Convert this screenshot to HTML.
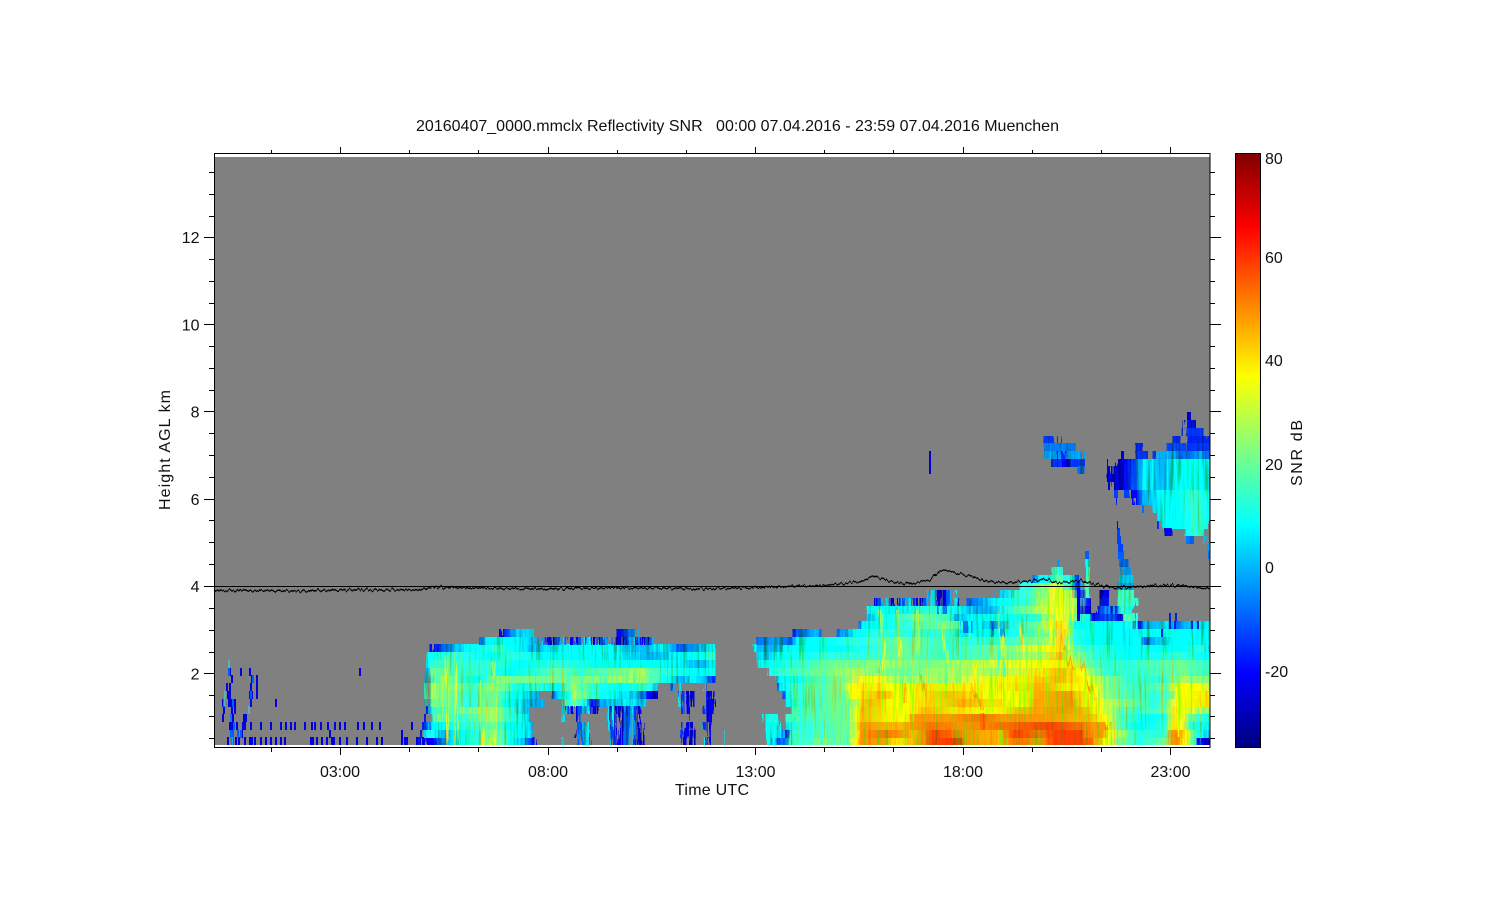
<!DOCTYPE html>
<html><head><meta charset="utf-8"><title>Reflectivity SNR</title>
<style>
html,body{margin:0;padding:0;background:#fff;width:1500px;height:900px;overflow:hidden}
svg{display:block}
text{font-family:"Liberation Sans",sans-serif;font-size:16px;fill:#111}
.n{stop-color:#0000c0}.B{stop-color:#0000ff}.b{stop-color:#0050ff}.a{stop-color:#00a0ff}.C{stop-color:#00e0ff}.c{stop-color:#00ffff}.t{stop-color:#30ffd0}.g{stop-color:#70ff90}.l{stop-color:#a0ff60}.Y{stop-color:#d8ff28}.y{stop-color:#ffff00}.h{stop-color:#ffd800}.o{stop-color:#ffb000}.O{stop-color:#ff9000}.r{stop-color:#ff7000}.R{stop-color:#ff4000}
</style></head><body>
<svg width="1500" height="900" viewBox="0 0 1500 900" xmlns="http://www.w3.org/2000/svg">
<defs>
<linearGradient id="m" gradientUnits="userSpaceOnUse" x1="210" y1="0" x2="1210" y2="0"></linearGradient>
<linearGradient id="cb" x1="0" y1="0" x2="0" y2="1"><stop offset="0" stop-color="#7f0000"/><stop offset=".125" stop-color="#ff0000"/><stop offset=".375" stop-color="#ffff00"/><stop offset=".625" stop-color="#00ffff"/><stop offset=".875" stop-color="#0000ff"/><stop offset="1" stop-color="#00007f"/></linearGradient>
<pattern id="p" width="23" height="8" patternUnits="userSpaceOnUse"><rect width="3" height="8" fill="#0000d0"/><rect x="3" width="4" height="8" fill="#0050ff"/><rect x="7" width="2" height="8" fill="#00a0ff"/><rect x="11" width="3" height="8" fill="#00d0ff"/><rect x="14" width="2" height="8" fill="#0030ff"/><rect x="18" width="3" height="8" fill="#0000e0"/></pattern>
<clipPath id="plot"><rect x="215" y="157" width="995" height="588"/></clipPath>
<filter id="shred" filterUnits="userSpaceOnUse" x="200" y="150" width="1020" height="600" color-interpolation-filters="sRGB">
<feTurbulence type="fractalNoise" baseFrequency=".3 .015" numOctaves="2" seed="7" result="nz"/>
<feColorMatrix in="nz" type="matrix" values="1 0 0 0 0 0 0 0 0 .5 0 0 0 0 0 0 0 0 0 1" result="nx"/>
<feDisplacementMap in="SourceGraphic" in2="nx" scale="14" xChannelSelector="R" yChannelSelector="G" result="d"/>
<feTurbulence type="fractalNoise" baseFrequency=".42 .018" numOctaves="2" seed="11" result="n2"/>
<feColorMatrix in="n2" type="matrix" values="1 0 0 0 0 -.5 0 0 0 .8 -1 0 0 0 1 0 0 0 0 1" result="m2"/>
<feComposite in="d" in2="m2" operator="arithmetic" k1="1.6" k2=".2" k3="0" k4="0"/>
</filter>
<filter id="jit" filterUnits="userSpaceOnUse" x="200" y="550" width="1020" height="60" color-interpolation-filters="sRGB">
<feTurbulence type="fractalNoise" baseFrequency=".35 .01" numOctaves="2" seed="3" result="nz"/>
<feColorMatrix in="nz" type="matrix" values="0 0 0 0 .5 0 1 0 0 0 0 0 0 0 0 0 0 0 0 1" result="ny"/>
<feDisplacementMap in="SourceGraphic" in2="ny" scale="7" xChannelSelector="R" yChannelSelector="G"/>
</filter>

<linearGradient id="L0" href="#m"><stop offset=".215" class="n"/><stop offset=".222" class="B"/><stop offset=".235" class="a"/><stop offset=".25" class="c"/><stop offset=".27" class="t"/><stop offset=".282" class="Y"/><stop offset=".29" class="g"/><stop offset=".302" class="c"/><stop offset=".315" class="a"/><stop offset=".324" class="B"/></linearGradient>
<linearGradient id="L1" href="#m"><stop offset=".215" class="a"/><stop offset=".22" class="t"/><stop offset=".227" class="C"/><stop offset=".235" class="a"/><stop offset=".25" class="c"/><stop offset=".27" class="t"/><stop offset=".282" class="l"/><stop offset=".295" class="t"/><stop offset=".305" class="c"/><stop offset=".315" class="C"/><stop offset=".323" class="a"/></linearGradient>
<linearGradient id="L2" href="#m"><stop offset=".215" class="B"/><stop offset=".222" class="C"/><stop offset=".235" class="c"/><stop offset=".26" class="t"/><stop offset=".282" class="g"/><stop offset=".3" class="c"/><stop offset=".315" class="C"/><stop offset=".322" class="a"/></linearGradient>
<linearGradient id="L3" href="#m"><stop offset=".222" class="a"/><stop offset=".228" class="g"/><stop offset=".25" class="t"/><stop offset=".282" class="l"/><stop offset=".3" class="t"/><stop offset=".315" class="C"/><stop offset=".318" class="a"/></linearGradient>
<linearGradient id="L4" href="#m"><stop offset=".218" class="a"/><stop offset=".225" class="t"/><stop offset=".25" class="g"/><stop offset=".282" class="l"/><stop offset=".3" class="t"/><stop offset=".318" class="a"/></linearGradient>
<linearGradient id="L5" href="#m"><stop offset=".217" class="a"/><stop offset=".222" class="g"/><stop offset=".24" class="g"/><stop offset=".26" class="t"/><stop offset=".282" class="g"/><stop offset=".3" class="c"/><stop offset=".32" class="a"/><stop offset=".335" class="a"/><stop offset=".355" class="t"/><stop offset=".365" class="g"/><stop offset=".375" class="C"/><stop offset=".382" class="B"/><stop offset=".395" class="a"/><stop offset=".42" class="C"/><stop offset=".437" class="a"/></linearGradient>
<linearGradient id="L6" href="#m"><stop offset=".216" class="C"/><stop offset=".222" class="l"/><stop offset=".24" class="g"/><stop offset=".26" class="t"/><stop offset=".282" class="g"/><stop offset=".305" class="c"/><stop offset=".329" class="a"/><stop offset=".342" class="b"/><stop offset=".355" class="c"/><stop offset=".365" class="l"/><stop offset=".372" class="g"/><stop offset=".38" class="t"/><stop offset=".4" class="c"/><stop offset=".43" class="a"/><stop offset=".44" class="B"/><stop offset=".447" class="n"/></linearGradient>
<linearGradient id="L7" href="#m"><stop offset=".216" class="C"/><stop offset=".222" class="l"/><stop offset=".25" class="g"/><stop offset=".26" class="t"/><stop offset=".285" class="l"/><stop offset=".295" class="g"/><stop offset=".31" class="c"/><stop offset=".325" class="t"/><stop offset=".35" class="C"/><stop offset=".36" class="l"/><stop offset=".38" class="t"/><stop offset=".41" class="c"/><stop offset=".44" class="t"/><stop offset=".447" class="a"/></linearGradient>
<linearGradient id="L8" href="#m"><stop offset=".216" class="a"/><stop offset=".222" class="t"/><stop offset=".235" class="l"/><stop offset=".25" class="t"/><stop offset=".27" class="c"/><stop offset=".287" class="l"/><stop offset=".305" class="g"/><stop offset=".355" class="g"/><stop offset=".38" class="g"/><stop offset=".42" class="l"/><stop offset=".44" class="g"/><stop offset=".458" class="c"/><stop offset=".47" class="a"/><stop offset=".485" class="C"/><stop offset=".495" class="a"/><stop offset=".504" class="B"/></linearGradient>
<linearGradient id="L9" href="#m"><stop offset=".216" class="a"/><stop offset=".222" class="g"/><stop offset=".25" class="t"/><stop offset=".28" class="t"/><stop offset=".3" class="c"/><stop offset=".33" class="t"/><stop offset=".35" class="g"/><stop offset=".37" class="t"/><stop offset=".41" class="g"/><stop offset=".43" class="l"/><stop offset=".45" class="t"/><stop offset=".48" class="c"/><stop offset=".49" class="C"/><stop offset=".504" class="c"/></linearGradient>
<linearGradient id="L10" href="#m"><stop offset=".216" class="C"/><stop offset=".222" class="t"/><stop offset=".28" class="t"/><stop offset=".31" class="c"/><stop offset=".35" class="t"/><stop offset=".39" class="c"/><stop offset=".44" class="c"/><stop offset=".47" class="C"/><stop offset=".49" class="a"/><stop offset=".504" class="C"/></linearGradient>
<linearGradient id="L11" href="#m"><stop offset=".216" class="c"/><stop offset=".25" class="t"/><stop offset=".28" class="c"/><stop offset=".305" class="t"/><stop offset=".33" class="C"/><stop offset=".36" class="c"/><stop offset=".41" class="C"/><stop offset=".44" class="a"/><stop offset=".47" class="C"/><stop offset=".49" class="c"/><stop offset=".504" class="t"/></linearGradient>
<linearGradient id="L12" href="#m"><stop offset=".222" class="B"/><stop offset=".233" class="b"/><stop offset=".245" class="a"/><stop offset=".26" class="c"/><stop offset=".285" class="t"/><stop offset=".305" class="c"/><stop offset=".32" class="a"/><stop offset=".35" class="C"/><stop offset=".39" class="c"/><stop offset=".43" class="a"/><stop offset=".455" class="C"/><stop offset=".47" class="b"/><stop offset=".49" class="a"/><stop offset=".502" class="C"/></linearGradient>
<linearGradient id="L13" href="#m"><stop offset=".267" class="b"/><stop offset=".28" class="C"/><stop offset=".3" class="c"/><stop offset=".325" class="a"/></linearGradient>
<linearGradient id="L14" href="#m"><stop offset=".29" class="B"/><stop offset=".305" class="a"/><stop offset=".322" class="C"/><stop offset=".407" class="B"/><stop offset=".425" class="a"/></linearGradient>

<linearGradient id="R0" href="#m"><stop offset=".555" class="c"/><stop offset=".562" class="C"/><stop offset=".57" class="b"/><stop offset=".578" class="a"/><stop offset=".582" class="t"/><stop offset=".61" class="g"/><stop offset=".64" class="g"/><stop offset=".645" class="y"/><stop offset=".652" class="O"/><stop offset=".675" class="O"/><stop offset=".685" class="h"/><stop offset=".705" class="o"/><stop offset=".725" class="R"/><stop offset=".747" class="R"/><stop offset=".755" class="O"/><stop offset=".79" class="o"/><stop offset=".805" class="r"/><stop offset=".83" class="O"/><stop offset=".845" class="R"/><stop offset=".872" class="R"/><stop offset=".89" class="o"/><stop offset=".898" class="y"/><stop offset=".91" class="g"/><stop offset=".93" class="t"/><stop offset=".955" class="g"/><stop offset=".963" class="O"/><stop offset=".97" class="O"/><stop offset=".976" class="y"/><stop offset=".985" class="t"/><stop offset=".99" class="B"/><stop offset="1" class="n"/></linearGradient>
<linearGradient id="R1" href="#m"><stop offset=".555" class="c"/><stop offset=".57" class="C"/><stop offset=".576" class="B"/><stop offset=".582" class="t"/><stop offset=".64" class="g"/><stop offset=".648" class="y"/><stop offset=".652" class="O"/><stop offset=".675" class="r"/><stop offset=".69" class="O"/><stop offset=".705" class="o"/><stop offset=".725" class="R"/><stop offset=".755" class="O"/><stop offset=".79" class="o"/><stop offset=".805" class="R"/><stop offset=".83" class="r"/><stop offset=".843" class="R"/><stop offset=".87" class="R"/><stop offset=".88" class="O"/><stop offset=".895" class="O"/><stop offset=".898" class="y"/><stop offset=".91" class="l"/><stop offset=".925" class="t"/><stop offset=".955" class="t"/><stop offset=".962" class="O"/><stop offset=".97" class="O"/><stop offset=".977" class="y"/><stop offset=".985" class="t"/><stop offset=".995" class="C"/><stop offset="1" class="a"/></linearGradient>
<linearGradient id="R2" href="#m"><stop offset=".576" class="C"/><stop offset=".59" class="t"/><stop offset=".64" class="g"/><stop offset=".647" class="h"/><stop offset=".652" class="O"/><stop offset=".69" class="o"/><stop offset=".72" class="r"/><stop offset=".755" class="O"/><stop offset=".79" class="r"/><stop offset=".84" class="R"/><stop offset=".873" class="r"/><stop offset=".88" class="O"/><stop offset=".897" class="O"/><stop offset=".902" class="l"/><stop offset=".915" class="t"/><stop offset=".93" class="c"/><stop offset=".955" class="t"/><stop offset=".962" class="h"/><stop offset=".97" class="y"/><stop offset=".98" class="t"/><stop offset="1" class="C"/></linearGradient>
<linearGradient id="R3" href="#m"><stop offset=".576" class="t"/><stop offset=".64" class="g"/><stop offset=".645" class="y"/><stop offset=".652" class="o"/><stop offset=".695" class="y"/><stop offset=".705" class="O"/><stop offset=".74" class="O"/><stop offset=".775" class="r"/><stop offset=".79" class="O"/><stop offset=".83" class="O"/><stop offset=".88" class="o"/><stop offset=".887" class="h"/><stop offset=".893" class="y"/><stop offset=".905" class="g"/><stop offset=".92" class="t"/><stop offset=".94" class="c"/><stop offset=".955" class="t"/><stop offset=".963" class="h"/><stop offset=".97" class="y"/><stop offset=".98" class="g"/><stop offset="1" class="c"/></linearGradient>
<linearGradient id="R4" href="#m"><stop offset=".581" class="t"/><stop offset=".64" class="g"/><stop offset=".645" class="y"/><stop offset=".652" class="o"/><stop offset=".675" class="h"/><stop offset=".695" class="y"/><stop offset=".715" class="o"/><stop offset=".78" class="y"/><stop offset=".795" class="h"/><stop offset=".81" class="o"/><stop offset=".85" class="O"/><stop offset=".875" class="o"/><stop offset=".887" class="y"/><stop offset=".905" class="g"/><stop offset=".93" class="t"/><stop offset=".955" class="g"/><stop offset=".963" class="h"/><stop offset=".975" class="y"/><stop offset=".99" class="l"/><stop offset="1" class="g"/></linearGradient>
<linearGradient id="R5" href="#m"><stop offset=".576" class="C"/><stop offset=".582" class="c"/><stop offset=".59" class="t"/><stop offset=".635" class="g"/><stop offset=".643" class="l"/><stop offset=".648" class="h"/><stop offset=".66" class="o"/><stop offset=".685" class="y"/><stop offset=".71" class="h"/><stop offset=".75" class="o"/><stop offset=".79" class="h"/><stop offset=".81" class="y"/><stop offset=".825" class="o"/><stop offset=".86" class="O"/><stop offset=".875" class="h"/><stop offset=".885" class="y"/><stop offset=".9" class="l"/><stop offset=".92" class="g"/><stop offset=".94" class="t"/><stop offset=".955" class="g"/><stop offset=".965" class="y"/><stop offset=".995" class="h"/><stop offset="1" class="y"/></linearGradient>
<linearGradient id="R6" href="#m"><stop offset=".573" class="B"/><stop offset=".578" class="C"/><stop offset=".585" class="t"/><stop offset=".635" class="g"/><stop offset=".642" class="y"/><stop offset=".65" class="h"/><stop offset=".675" class="o"/><stop offset=".69" class="y"/><stop offset=".71" class="h"/><stop offset=".74" class="o"/><stop offset=".78" class="y"/><stop offset=".81" class="y"/><stop offset=".83" class="o"/><stop offset=".855" class="O"/><stop offset=".875" class="h"/><stop offset=".88" class="y"/><stop offset=".9" class="g"/><stop offset=".94" class="t"/><stop offset=".96" class="g"/><stop offset=".97" class="y"/><stop offset="1" class="h"/></linearGradient>
<linearGradient id="R7" href="#m"><stop offset=".568" class="n"/><stop offset=".573" class="C"/><stop offset=".585" class="t"/><stop offset=".63" class="g"/><stop offset=".642" class="y"/><stop offset=".66" class="h"/><stop offset=".68" class="y"/><stop offset=".71" class="h"/><stop offset=".735" class="h"/><stop offset=".78" class="y"/><stop offset=".84" class="o"/><stop offset=".85" class="h"/><stop offset=".88" class="y"/><stop offset=".9" class="g"/><stop offset=".93" class="t"/><stop offset=".955" class="g"/><stop offset=".97" class="y"/><stop offset=".99" class="y"/><stop offset="1" class="l"/></linearGradient>
<linearGradient id="R8" href="#m"><stop offset=".566" class="a"/><stop offset=".571" class="C"/><stop offset=".58" class="c"/><stop offset=".6" class="t"/><stop offset=".63" class="g"/><stop offset=".642" class="l"/><stop offset=".66" class="y"/><stop offset=".69" class="l"/><stop offset=".74" class="l"/><stop offset=".79" class="y"/><stop offset=".82" class="h"/><stop offset=".85" class="o"/><stop offset=".875" class="y"/><stop offset=".89" class="l"/><stop offset=".92" class="t"/><stop offset=".95" class="t"/><stop offset=".97" class="l"/><stop offset="1" class="g"/></linearGradient>
<linearGradient id="R9" href="#m"><stop offset=".558" class="c"/><stop offset=".57" class="t"/><stop offset=".62" class="g"/><stop offset=".64" class="l"/><stop offset=".695" class="g"/><stop offset=".735" class="l"/><stop offset=".79" class="l"/><stop offset=".83" class="h"/><stop offset=".855" class="o"/><stop offset=".87" class="y"/><stop offset=".885" class="g"/><stop offset=".9" class="t"/><stop offset=".93" class="t"/><stop offset=".97" class="g"/><stop offset="1" class="t"/></linearGradient>
<linearGradient id="R10" href="#m"><stop offset=".548" class="C"/><stop offset=".56" class="c"/><stop offset=".59" class="t"/><stop offset=".625" class="g"/><stop offset=".65" class="g"/><stop offset=".67" class="l"/><stop offset=".72" class="g"/><stop offset=".75" class="l"/><stop offset=".83" class="y"/><stop offset=".86" class="h"/><stop offset=".875" class="g"/><stop offset=".895" class="t"/><stop offset=".92" class="t"/><stop offset=".97" class="g"/><stop offset="1" class="t"/></linearGradient>
<linearGradient id="R11" href="#m"><stop offset=".546" class="C"/><stop offset=".555" class="a"/><stop offset=".57" class="c"/><stop offset=".62" class="t"/><stop offset=".65" class="t"/><stop offset=".69" class="g"/><stop offset=".74" class="t"/><stop offset=".79" class="g"/><stop offset=".83" class="l"/><stop offset=".85" class="o"/><stop offset=".865" class="l"/><stop offset=".885" class="t"/><stop offset=".92" class="c"/><stop offset=".97" class="t"/><stop offset="1" class="c"/></linearGradient>
<linearGradient id="R12" href="#m"><stop offset=".543" class="c"/><stop offset=".55" class="a"/><stop offset=".565" class="a"/><stop offset=".58" class="c"/><stop offset=".63" class="c"/><stop offset=".66" class="t"/><stop offset=".69" class="g"/><stop offset=".74" class="t"/><stop offset=".79" class="g"/><stop offset=".84" class="y"/><stop offset=".85" class="h"/><stop offset=".865" class="g"/><stop offset=".88" class="t"/><stop offset=".915" class="c"/><stop offset=".97" class="c"/><stop offset=".995" class="t"/><stop offset="1" class="a"/></linearGradient>
<linearGradient id="R13" href="#m"><stop offset=".546" class="b"/><stop offset=".565" class="a"/><stop offset=".58" class="b"/><stop offset=".59" class="C"/><stop offset=".61" class="c"/><stop offset=".645" class="t"/><stop offset=".69" class="g"/><stop offset=".74" class="t"/><stop offset=".79" class="t"/><stop offset=".84" class="l"/><stop offset=".85" class="h"/><stop offset=".865" class="t"/><stop offset=".88" class="c"/><stop offset=".92" class="C"/><stop offset=".93" class="c"/><stop offset=".935" class="b"/><stop offset=".945" class="a"/><stop offset=".965" class="c"/><stop offset="1" class="C"/></linearGradient>
<linearGradient id="R14" href="#m"><stop offset=".582" class="n"/><stop offset=".59" class="b"/><stop offset=".605" class="a"/><stop offset=".613" class="b"/><stop offset=".628" class="b"/><stop offset=".635" class="a"/><stop offset=".645" class="c"/><stop offset=".67" class="t"/><stop offset=".74" class="t"/><stop offset=".75" class="C"/><stop offset=".79" class="c"/><stop offset=".84" class="g"/><stop offset=".855" class="h"/><stop offset=".865" class="t"/><stop offset=".885" class="c"/><stop offset=".915" class="C"/><stop offset=".96" class="c"/><stop offset="1" class="C"/></linearGradient>
<linearGradient id="R15" href="#m"><stop offset=".648" class="b"/><stop offset=".652" class="C"/><stop offset=".67" class="c"/><stop offset=".69" class="t"/><stop offset=".735" class="g"/><stop offset=".76" class="c"/><stop offset=".785" class="a"/><stop offset=".81" class="t"/><stop offset=".83" class="g"/><stop offset=".848" class="h"/><stop offset=".855" class="y"/><stop offset=".865" class="c"/><stop offset=".88" class="c"/><stop offset=".915" class="C"/><stop offset=".925" class="t"/><stop offset=".928" class="B"/><stop offset=".935" class="a"/><stop offset=".945" class="a"/><stop offset=".96" class="C"/><stop offset=".965" class="b"/><stop offset=".975" class="a"/><stop offset="1" class="C"/></linearGradient>
<linearGradient id="R16" href="#m"><stop offset=".656" class="a"/><stop offset=".67" class="c"/><stop offset=".71" class="g"/><stop offset=".74" class="t"/><stop offset=".745" class="a"/><stop offset=".76" class="C"/><stop offset=".79" class="c"/><stop offset=".83" class="t"/><stop offset=".85" class="y"/><stop offset=".865" class="g"/><stop offset=".878" class="C"/><stop offset=".882" class="B"/><stop offset=".9" class="b"/><stop offset=".912" class="n"/><stop offset=".915" class="g"/><stop offset=".925" class="t"/></linearGradient>
<linearGradient id="R17" href="#m"><stop offset=".658" class="C"/><stop offset=".67" class="c"/><stop offset=".69" class="C"/><stop offset=".72" class="t"/><stop offset=".75" class="C"/><stop offset=".765" class="a"/><stop offset=".78" class="a"/><stop offset=".8" class="t"/><stop offset=".85" class="y"/><stop offset=".865" class="l"/><stop offset=".875" class="B"/><stop offset=".88" class="n"/></linearGradient>
<linearGradient id="R17b" href="#m"><stop offset=".887" class="B"/><stop offset=".9" class="a"/><stop offset=".905" class="B"/><stop offset=".912" class="t"/><stop offset=".923" class="c"/></linearGradient>
<linearGradient id="R18" href="#m"><stop offset=".758" class="b"/><stop offset=".775" class="a"/><stop offset=".79" class="c"/><stop offset=".815" class="t"/><stop offset=".85" class="y"/><stop offset=".865" class="l"/><stop offset=".875" class="b"/><stop offset=".88" class="B"/></linearGradient>
<linearGradient id="R19" href="#m"><stop offset=".788" class="a"/><stop offset=".81" class="t"/><stop offset=".83" class="g"/><stop offset=".85" class="y"/><stop offset=".862" class="l"/><stop offset=".87" class="B"/><stop offset=".876" class="g"/><stop offset=".88" class="t"/></linearGradient>
<linearGradient id="R20" href="#m"><stop offset=".82" class="t"/><stop offset=".835" class="l"/><stop offset=".85" class="Y"/><stop offset=".862" class="c"/><stop offset=".868" class="B"/><stop offset=".875" class="g"/><stop offset=".88" class="t"/></linearGradient>
<linearGradient id="R21" href="#m"><stop offset=".823" class="b"/><stop offset=".83" class="C"/><stop offset=".842" class="c"/><stop offset=".85" class="g"/><stop offset=".862" class="c"/><stop offset=".869" class="B"/></linearGradient>
<linearGradient id="cU" href="#m"><stop offset=".905" class="n"/><stop offset=".92" class="B"/><stop offset=".935" class="b"/><stop offset=".945" class="a"/><stop offset=".96" class="a"/><stop offset=".975" class="b"/><stop offset=".99" class="a"/><stop offset="1" class="b"/></linearGradient>
<linearGradient id="cM" href="#m"><stop offset=".905" class="n"/><stop offset=".915" class="B"/><stop offset=".925" class="b"/><stop offset=".935" class="C"/><stop offset=".95" class="a"/><stop offset=".965" class="C"/><stop offset=".98" class="c"/><stop offset="1" class="C"/></linearGradient>
<linearGradient id="cL" href="#m"><stop offset=".925" class="B"/><stop offset=".935" class="a"/><stop offset=".95" class="C"/><stop offset=".97" class="c"/><stop offset=".985" class="t"/><stop offset="1" class="c"/></linearGradient>
<linearGradient id="c2" href="#m"><stop offset=".834" class="b"/><stop offset=".845" class="a"/><stop offset=".85" class="b"/><stop offset=".86" class="a"/><stop offset=".868" class="C"/><stop offset=".873" class="a"/></linearGradient>
</defs>

<rect x="215" y="157" width="995" height="588" fill="#808080"/>

<g clip-path="url(#plot)">
<g filter="url(#shred)">
<g shape-rendering="crispEdges">
<!-- left blob -->
<rect x="425" y="737" width="109" height="8" fill="url(#L0)"/>
<rect x="425" y="730" width="108" height="8" fill="url(#L1)"/>
<rect x="425" y="722" width="107" height="8" fill="url(#L2)"/>
<rect x="432" y="714" width="96" height="8" fill="url(#L3)"/>
<rect x="428" y="706" width="100" height="8" fill="url(#L4)"/>
<rect x="427" y="699" width="118" height="8" fill="url(#L5)"/><rect x="565" y="699" width="82" height="8" fill="url(#L5)"/>
<rect x="426" y="691" width="113" height="8" fill="url(#L6)"/><rect x="552" y="691" width="105" height="8" fill="url(#L6)"/>
<rect x="426" y="683" width="231" height="8" fill="url(#L7)"/>
<rect x="426" y="675" width="288" height="8" fill="url(#L8)"/>
<rect x="426" y="668" width="288" height="8" fill="url(#L9)"/>
<rect x="426" y="660" width="288" height="8" fill="url(#L10)"/>
<rect x="426" y="652" width="288" height="8" fill="url(#L11)"/>
<rect x="432" y="644" width="282" height="8" fill="url(#L12)"/>
<rect x="477" y="637" width="58" height="8" fill="url(#L13)"/>
<rect x="540" y="637" width="113" height="8" fill="url(#p)"/>
<rect x="500" y="629" width="32" height="8" fill="url(#L14)"/><rect x="617" y="629" width="18" height="8" fill="url(#L14)"/>
<!-- sparse patches -->
<path fill="url(#p)" d="M561 737h3v8h-3zM580 737h11v8h-11zM607 737h36v8h-36zM682 737h11v8h-11zM703 737h8v8h-8zM723 737h2v8h-2zM573 730h4v8h-4zM580 730h10v8h-10zM610 730h32v8h-32zM681 730h14v8h-14zM706 730h4v8h-4zM723 730h2v8h-2zM561 722h2v8h-2zM578 722h12v8h-12zM607 722h38v8h-38zM682 722h10v8h-10zM703 722h7v8h-7zM562 714h3v8h-3zM575 714h5v8h-5zM605 714h35v8h-35zM687 714h3v8h-3zM706 714h6v8h-6zM565 706h35v8h-35zM607 706h35v8h-35zM682 706h8v8h-8zM704 706h8v8h-8zM680 699h13v8h-13zM705 699h10v8h-10zM680 691h13v8h-13zM705 691h5v8h-5zM670 683h10v8h-10zM703 683h5v8h-5z"/>
<!-- right blob -->
<rect x="765" y="737" width="445" height="8" fill="url(#R0)"/>
<rect x="765" y="730" width="445" height="8" fill="url(#R1)"/>
<rect x="765" y="722" width="15" height="8" fill="#00f0ff"/><rect x="786" y="722" width="424" height="8" fill="url(#R2)"/>
<rect x="765" y="714" width="15" height="8" fill="#10ffe8"/><rect x="786" y="714" width="424" height="8" fill="url(#R3)"/>
<rect x="791" y="706" width="419" height="8" fill="url(#R4)"/>
<rect x="786" y="699" width="424" height="8" fill="url(#R5)"/>
<rect x="783" y="691" width="427" height="8" fill="url(#R6)"/>
<rect x="778" y="683" width="432" height="8" fill="url(#R7)"/>
<rect x="776" y="675" width="434" height="8" fill="url(#R8)"/>
<rect x="768" y="668" width="442" height="8" fill="url(#R9)"/>
<rect x="758" y="660" width="452" height="8" fill="url(#R10)"/>
<rect x="756" y="652" width="454" height="8" fill="url(#R11)"/>
<rect x="753" y="644" width="457" height="8" fill="url(#R12)"/>
<rect x="756" y="637" width="454" height="8" fill="url(#R13)"/>
<rect x="792" y="629" width="31" height="8" fill="url(#R14)"/><rect x="838" y="629" width="372" height="8" fill="url(#R14)"/>
<rect x="858" y="621" width="352" height="8" fill="url(#R15)"/>
<rect x="866" y="613" width="271" height="8" fill="url(#R16)"/>
<rect x="868" y="606" width="222" height="8" fill="url(#R17)"/><rect x="1097" y="606" width="38" height="8" fill="url(#R17b)"/>
<rect x="873" y="598" width="87" height="8" fill="url(#p)"/><rect x="968" y="598" width="122" height="8" fill="url(#R18)"/><rect x="1100" y="598" width="8" height="8" fill="#0020f0"/><rect x="1117" y="598" width="20" height="8" fill="url(#R19)"/>
<rect x="928" y="590" width="27" height="8" fill="url(#p)"/><rect x="998" y="590" width="92" height="8" fill="url(#R19)"/><rect x="1100" y="590" width="8" height="8" fill="#0000d0"/><rect x="1118" y="590" width="16" height="8" fill="url(#R19)"/>
<rect x="1020" y="582" width="70" height="8" fill="url(#R20)"/><rect x="1117" y="582" width="17" height="8" fill="url(#c2)"/>
<rect x="1033" y="575" width="46" height="8" fill="url(#R21)"/><rect x="1085" y="575" width="6" height="8" fill="#40ffb0"/><rect x="1118" y="575" width="14" height="8" fill="#00c0ff"/>
<rect x="1053" y="567" width="12" height="8" fill="#30f0d0"/><rect x="1085" y="567" width="6" height="8" fill="#20ffd0"/><rect x="1121" y="567" width="9" height="8" fill="#0090ff"/>
<rect x="1058" y="559" width="2" height="8" fill="#0090ff"/><rect x="1084" y="559" width="6" height="8" fill="#00e0ff"/><rect x="1119" y="559" width="9" height="8" fill="#0060ff"/>
<!-- blue holes at top of right blob -->
<rect x="960" y="621" width="10" height="12" fill="#0070ff"/><rect x="990" y="621" width="4" height="16" fill="#0050ff"/><rect x="1002" y="629" width="3" height="8" fill="#00a0ff"/><rect x="940" y="606" width="8" height="8" fill="#0070ff"/>
<!-- small cloud -->
<path fill="#0030ff" d="M1044 436h11v8h-11zM1061 436h3v8h-3z"/>
<path fill="#0070ff" d="M1044 443h13v8h-13zM1059 443h18v8h-18z"/>
<path fill="#0090ff" d="M1044 451h16v8h-16zM1066 451h16v8h-16z"/><rect x="1060" y="451" width="6" height="8" fill="#0020f0"/>
<path fill="#0030ff" d="M1051 459h9v8h-9zM1072 459h11v8h-11z"/><rect x="1060" y="459" width="12" height="8" fill="#0000d0"/>
<rect x="1078" y="466" width="5" height="8" fill="#0060ff"/>
<!-- upper cloud -->
<rect x="1185" y="420" width="9" height="8" fill="#0010e0"/>
<rect x="1184" y="428" width="21" height="8" fill="#0030ff"/>
<rect x="1173" y="436" width="5" height="8" fill="#0020f0"/><rect x="1188" y="436" width="22" height="8" fill="#0020f0"/>
<rect x="1136" y="443" width="5" height="8" fill="#0020f0"/><rect x="1166" y="443" width="19" height="8" fill="#0040ff"/><rect x="1187" y="443" width="23" height="8" fill="#0030ff"/>
<rect x="1134" y="451" width="13" height="8" fill="#0030ff"/><rect x="1150" y="451" width="4" height="8" fill="#0030ff"/><rect x="1158" y="451" width="52" height="8" fill="url(#cU)"/>
<rect x="1116" y="459" width="94" height="8" fill="url(#cM)"/>
<rect x="1113" y="466" width="97" height="8" fill="url(#cM)"/>
<rect x="1107" y="474" width="103" height="8" fill="url(#cM)"/>
<rect x="1114" y="482" width="96" height="8" fill="url(#cM)"/>
<rect x="1132" y="490" width="78" height="8" fill="url(#cL)"/>
<rect x="1134" y="497" width="76" height="8" fill="url(#cL)"/>
<rect x="1152" y="505" width="58" height="8" fill="url(#cL)"/>
<rect x="1156" y="513" width="54" height="8" fill="url(#cL)"/>
<rect x="1163" y="521" width="44" height="8" fill="url(#cL)"/>
<rect x="1164" y="528" width="8" height="8" fill="#0000e0"/><rect x="1184" y="528" width="21" height="8" fill="url(#cL)"/>
<rect x="1185" y="536" width="9" height="8" fill="#0060ff"/><rect x="1205" y="536" width="2" height="8" fill="#00b0ff"/>
</g>
<g fill="none" stroke-width="2" opacity=".75">
<path stroke="#ffff00" d="M1047 590L1053 657M972 633L977 677M1037 623L1043 677M890 697L892 723M1070 607L1073 650"/>
<path stroke="#d8ff28" d="M917 610L920 657M943 623L947 663M1020 623L1027 667M1040 592L1045 633M880 610L883 670M897 610L900 657M1000 612L1003 657"/>
<path stroke="#ff9000" d="M1060 633L1073 670M1080 657L1093 700M920 673L925 697M902 683L905 703M973 687L983 710"/>
<path stroke="#ff4000" d="M983 713L983 730"/>
<path stroke="#30ffd0" d="M873 633L880 673M1000 650L1003 677"/>
<path stroke="#d8ff28" d="M493 662L497 745M445 655L447 745M455 652L458 745M482 680L484 745"/>
<path stroke="#ffff00" d="M1100 690L1110 737M1175 695L1178 737"/>
</g>
</g>
<!-- things kept sharp -->
<g shape-rendering="crispEdges">
<path fill="#0060ff" d="M1085 551h4v8h-4zM1118 551h6v8h-6z"/>
<path fill="#0040ff" d="M1118 544h5v8h-5zM1117 536h4v8h-4zM1117 528h3v8h-3z"/>
<rect x="1117" y="521" width="1" height="8" fill="#0000e0"/>
<rect x="1077" y="588" width="3" height="33" fill="#0000e0"/>
<rect x="1102" y="596" width="6" height="10" fill="#0010e0"/>
<rect x="1187" y="412" width="4" height="8" fill="#0000c0"/>
<rect x="1121" y="451" width="3" height="8" fill="#0000d0"/>
<rect x="1107" y="459" width="1" height="8" fill="#0000d0"/>
<rect x="1107" y="466" width="3" height="8" fill="#0000d0"/>
<rect x="1108" y="482" width="2" height="8" fill="#0000d0"/>
<rect x="1114" y="490" width="4" height="8" fill="#0040ff"/><rect x="1124" y="490" width="5" height="8" fill="#0040ff"/>
<rect x="1116" y="497" width="1" height="8" fill="#0020f0"/>
<rect x="1142" y="505" width="2" height="8" fill="#0070ff"/>
<rect x="1157" y="521" width="2" height="8" fill="#0030ff"/>
<rect x="1207" y="544" width="2" height="8" fill="#00a0ff"/>
<rect x="1208" y="551" width="2" height="8" fill="#0070ff"/>
<!-- isolated -->
<rect x="929" y="451" width="2" height="23" fill="#0000d0"/>
<!-- left sparse ticks -->
<path fill="none" stroke="#0000e0" stroke-width="1.6" d="M228 737v8M232 737v8M236 737v8M239 737v8M245 737v8M250 737v8M252 737v8M255 737v8M261 737v8M266 737v8M271 737v8M276 737v8M281 737v8M285 737v8M311 737v8M313 737v8M317 737v8M322 737v8M327 737v8M332 737v8M334 737v8M340 737v8M347 737v8M357 737v8M367 737v8M377 737v8M382 737v8M402 737v8M405 737v8M407 737v8M417 737v8M420 737v8M423 737v8M230 722v8M232 722v8M237 722v8M243 722v8M245 722v8M251 722v8M261 722v8M271 722v8M281 722v8M286 722v8M291 722v8M295 722v8M305 722v8M312 722v8M315 722v8M321 722v8M328 722v8M335 722v8M340 722v8M345 722v8M358 722v8M364 722v8M372 722v8M380 722v8M412 722v8M242 730v8M330 730v8M402 730v8M223 714v8M231 714v8M233 714v8M244 714v8M246 714v8M224 706v8M232 706v8M235 706v8M223 699v8M229 699v8M231 699v8M233 699v8M235 699v8M251 699v8M276 699v8M228 691v8M230 691v8M250 691v8M252 691v8M257 691v8M227 683v8M230 683v8M251 683v8M257 683v8M232 675v8M252 675v8M257 675v8M230 668v8M241 668v8M250 668v8M360 668v8"/>
<path fill="none" stroke="#0060ff" stroke-width="1.6" d="M233 737v8M238 730v8M231 730v8M233 730v8M234 722v8M241 730v8M251 691v8M253 675v8M229 668v8M233 699v8"/>
<path fill="none" stroke="#30e8e0" stroke-width="1.4" d="M229 660v8M224 699v8M225 691v8M249 706v8M231 714v8M232 737v8"/>
<!-- sparse near blobs -->
<path fill="none" stroke="#0020e0" stroke-width="1.6" d="M419 737v8M421 730v8M423 722v8M425 714v8M427 706v8M1162 637v-8M1170 629v-8M1175 629v-8M1192 629v-8M1198 629v-8M1170 621v-8M1176 621v-8"/>
</g>
</g>

<!-- curve and 4km line -->
<polyline filter="url(#jit)" fill="none" stroke="#000" stroke-width="1.4" points="215,590.5 300,591 350,590 420,590 424,589.5 428,587.5 440,587 500,588.5 550,589 580,588.5 620,587.5 700,589 750,587.7 783,586.7 833,584.7 860,581.7 875,575.7 890,581.7 910,584 930,580 940,570.7 957,572.3 977,579 997,582.7 1013,582.7 1043,579.3 1060,583.3 1080,580.7 1093,584.3 1117,588 1150,586 1177,585 1210,588.7"/>
<g shape-rendering="crispEdges">
<line x1="215" y1="586.5" x2="1210" y2="586.5" stroke="#000" stroke-width="1"/>

<!-- frame -->
<rect x="214.5" y="153.5" width="995.5" height="594" fill="none" stroke="#000" stroke-width="1"/>
<!-- ticks -->
<path fill="none" stroke="#000" stroke-width="1" d="M204 237.5h10M204 324.5h10M204 411.5h10M204 499.5h10M204 586.5h10M204 673.5h10M1210 237.5h11M1210 324.5h11M1210 411.5h11M1210 499.5h11M1210 586.5h11M1210 673.5h11
M209 172.5h5M209 194.5h5M209 216.5h5M209 259.5h5M209 281.5h5M209 303.5h5M209 346.5h5M209 368.5h5M209 390.5h5M209 433.5h5M209 455.5h5M209 477.5h5M209 520.5h5M209 542.5h5M209 564.5h5M209 608.5h5M209 630.5h5M209 652.5h5M209 695.5h5M209 716.5h5M209 738.5h5
M1210 172.5h5M1210 194.5h5M1210 216.5h5M1210 259.5h5M1210 281.5h5M1210 303.5h5M1210 346.5h5M1210 368.5h5M1210 390.5h5M1210 433.5h5M1210 455.5h5M1210 477.5h5M1210 520.5h5M1210 542.5h5M1210 564.5h5M1210 608.5h5M1210 630.5h5M1210 652.5h5M1210 695.5h5M1210 716.5h5M1210 738.5h5
M340.5 153v-6M548.5 153v-6M755.5 153v-6M963.5 153v-6M1170.5 153v-6M271.5 153v-3M409.5 153v-3M478.5 153v-3M617.5 153v-3M686.5 153v-3M824.5 153v-3M893.5 153v-3M1032.5 153v-3M1101.5 153v-3
M340.5 748v7M548.5 748v7M755.5 748v7M963.5 748v7M1170.5 748v7M271.5 748v4M409.5 748v4M478.5 748v4M617.5 748v4M686.5 748v4M824.5 748v4M893.5 748v4M1032.5 748v4M1101.5 748v4"/>
<!-- colorbar -->
<rect x="1235.5" y="153.5" width="25" height="594" fill="url(#cb)" stroke="#000" stroke-width="1"/>
</g>

<text x="416" y="131" textLength="643" lengthAdjust="spacing">20160407_0000.mmclx Reflectivity SNR&#160;&#160;&#160;00:00 07.04.2016 - 23:59 07.04.2016 Muenchen</text>
<g text-anchor="end">
<text x="199.5" y="243">12</text><text x="199.5" y="330.5">10</text><text x="199.5" y="417.5">8</text><text x="199.5" y="505">6</text><text x="199.5" y="592">4</text><text x="199.5" y="679.5">2</text>
</g>
<g text-anchor="middle">
<text x="340" y="777">03:00</text><text x="548" y="777">08:00</text><text x="755.5" y="777">13:00</text><text x="963" y="777">18:00</text><text x="1170.5" y="777">23:00</text>
<text x="712" y="795" textLength="74">Time UTC</text>
<text transform="translate(170 450) rotate(-90)" textLength="120">Height AGL km</text>
<text transform="translate(1302 453) rotate(-90)" textLength="66">SNR dB</text>
</g>
<text x="1265" y="164">80</text><text x="1265" y="263">60</text><text x="1265" y="366">40</text><text x="1265" y="470">20</text><text x="1265" y="573">0</text><text x="1265" y="677">-20</text>
</svg>
</body></html>
